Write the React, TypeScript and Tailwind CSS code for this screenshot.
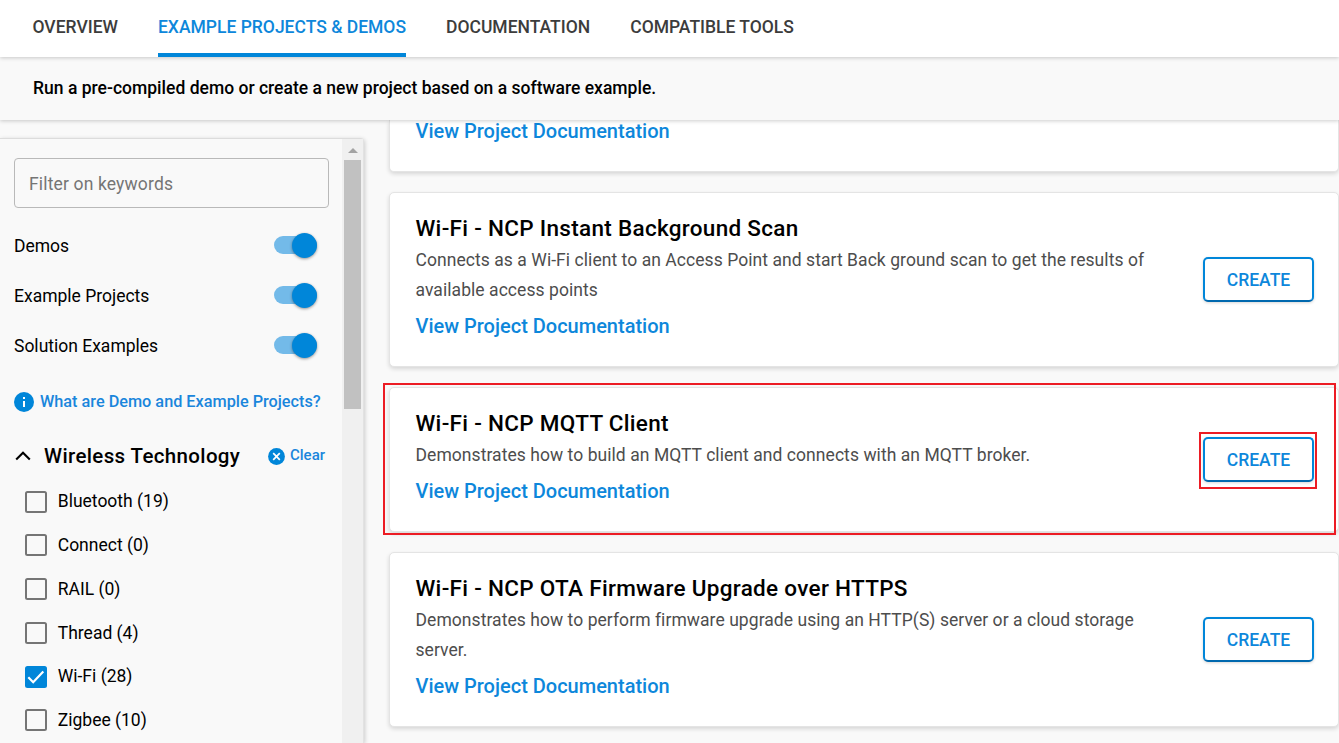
const tabs = ["OVERVIEW", "EXAMPLE PROJECTS & DEMOS", "DOCUMENTATION", "COMPATIBLE TOOLS"];
const activeTab = tabs[1];

const toggles = ["Demos", "Example Projects", "Solution Examples"];

const technologies = [
  { name: "Bluetooth", count: 19, checked: false },
  { name: "Connect", count: 0, checked: false },
  { name: "RAIL", count: 0, checked: false },
  { name: "Thread", count: 4, checked: false },
  { name: "Wi-Fi", count: 28, checked: true },
  { name: "Zigbee", count: 10, checked: false },
];

function Tabs() {
  return (
    <nav className="relative z-20 flex h-[57px] shrink-0 gap-10 bg-white pl-[32.5px] shadow-[0_1px_4px_rgba(0,0,0,0.2)]">
      {tabs.map((tab) => (
        <a
          key={tab}
          className={
            tab === activeTab
              ? "h-[57px] border-b-4 border-[#0086d9] text-[17.5px] leading-[54px] font-medium whitespace-nowrap text-[#0d87db]"
              : "h-[57px] text-[17.5px] leading-[54px] font-medium whitespace-nowrap text-[#3c3c3c]"
          }
        >
          {tab}
        </a>
      ))}
    </nav>
  );
}

function Toggle() {
  return (
    <span className="flex h-[18px] w-[43px] items-center justify-end rounded-full bg-[#73bae9]">
      <span className="size-[25px] shrink-0 rounded-full bg-[#0086d9] shadow-[0_1px_3px_rgba(0,0,0,0.4)]" />
    </span>
  );
}

function Checkbox({ checked }: { checked: boolean }) {
  if (!checked) {
    return <span className="size-[22px] rounded-[2.5px] border-2 border-[#757575]" />;
  }
  return (
    <span className="size-[22px] rounded-[2.5px] bg-[#0086d9]">
      <svg viewBox="0 0 22 22" className="size-[22px]" fill="none" stroke="#fff" strokeWidth="2.2">
        <path d="M3.3 11.3 8.2 16.2 18.3 5.6" />
      </svg>
    </span>
  );
}

function Sidebar() {
  return (
    <aside className="mt-[18px] flex w-[364px] shrink-0 rounded-tr-[4px] border-t border-r border-t-[#dcdcdc] border-r-[#e2e2e2] bg-[#f9f9f9] shadow-[1px_1px_4px_rgba(0,0,0,0.18)]">
      <div className="w-[342px] shrink-0 pt-[19px] pl-[14px]">
        <div className="h-[50px] w-[315px] rounded-[4px] border border-[#b9b9b9] pl-[14px] text-[17.5px] leading-[51px] tracking-[0.15px] text-[#757575]">
          Filter on keywords
        </div>
        <div className="mt-[12px]">
          {toggles.map((label) => (
            <div key={label} className="flex h-[50px] items-center justify-between pr-[25px] text-[17.5px] text-black">
              <span className="pt-[2px]">{label}</span>
              <Toggle />
            </div>
          ))}
        </div>
        <a className="mt-[22px] flex h-[20px] items-center gap-[6px] text-[16.25px] leading-[20px] font-medium whitespace-nowrap text-[#1a86dc]">
          <svg viewBox="0 0 20 20" className="size-5" fill="#0086d9">
            <circle cx="10" cy="10" r="10" />
            <path d="M9 5h2v2H9zM9 9h2v6H9z" fill="#fff" />
          </svg>
          <span>What are Demo and Example Projects?</span>
        </a>
        <div className="mt-[29px] flex h-[30px] items-center">
          <svg viewBox="0 0 18 12" className="h-3 w-[18px]" fill="none" stroke="#000" strokeWidth="2.1">
            <path d="M2.2 9.6 9 2.8 15.8 9.6" />
          </svg>
          <h2 className="ml-3 w-[224px] text-[20.5px] leading-[30px] font-medium tracking-[0.36px] whitespace-nowrap text-black">Wireless Technology</h2>
          <svg viewBox="0 0 17 17" className="size-[17px] shrink-0">
            <circle cx="8.5" cy="8.5" r="8.4" fill="#0086d9" />
            <path d="M5.2 5.2 11.8 11.8M11.8 5.2 5.2 11.8" stroke="#fff" strokeWidth="1.7" />
          </svg>
          <span className="ml-[5px] pb-[2px] text-[15px] leading-[28px] font-medium text-[#1a86dc]">Clear</span>
        </div>
        <ul className="mt-[8.7px] pl-[11px]">
          {technologies.map((t) => (
            <li key={t.name} className="flex h-[43.75px] items-center gap-[10.75px] text-[17.5px] text-black">
              <Checkbox checked={t.checked} />
              <span>{`${t.name} (${t.count})`}</span>
            </li>
          ))}
        </ul>
      </div>
      <div className="flex w-[21px] flex-col items-center bg-[#f0f0f0]">
        <svg viewBox="0 0 10 5" className="mt-[9px] h-[5px] w-[10px]" fill="#a3a3a3">
          <path d="M0 5 5 0 10 5z" />
        </svg>
        <div className="mt-[7px] h-[249px] w-[17px] bg-[#c1c1c1]" />
      </div>
    </aside>
  );
}

interface Project {
  title: string;
  lines: string[];
  highlighted?: boolean;
}

const projects: Project[] = [
  {
    title: "Wi-Fi - NCP Instant Background Scan",
    lines: [
      "Connects as a Wi-Fi client to an Access Point and start Back ground scan to get the results of",
      "available access points",
    ],
  },
  {
    title: "Wi-Fi - NCP MQTT Client",
    lines: ["Demonstrates how to build an MQTT client and connects with an MQTT broker."],
    highlighted: true,
  },
  {
    title: "Wi-Fi - NCP OTA Firmware Upgrade over HTTPS",
    lines: ["Demonstrates how to perform firmware upgrade using an HTTP(S) server or a cloud storage", "server."],
  },
];

function DocLink() {
  return <a className="block text-[20px] leading-[30px] font-medium text-[#0d87db]">View Project Documentation</a>;
}

function ProjectCard({ title, lines, highlighted }: Project) {
  return (
    <article className="relative flex items-center justify-between rounded-[5px] border border-[#e4e4e4] bg-white pr-[24px] pl-[25.5px] shadow-[0_2px_4px_rgba(0,0,0,0.14)]">
      <div className="pt-[20px] pb-[25px]">
        <h3 className="text-[22.5px] leading-[30px] font-medium tracking-[0.3px] text-black">{title}</h3>
        <div className="mt-[2px] mb-[6px]">
          {lines.map((line) => (
            <p key={line} className="text-[17.5px] leading-[30px] tracking-[0.058px] whitespace-nowrap text-[#4d4d4d]">
              {line}
            </p>
          ))}
        </div>
        <DocLink />
      </div>
      <button className="relative h-[45px] w-[111px] rounded-[5px] border-2 border-[#0086d9] border-b-[#0068ae] bg-white pt-px text-[17.5px] font-medium text-[#0d87db] shadow-[0_1px_3px_rgba(0,0,0,0.16)]">
        CREATE
        {highlighted && (
          <span className="absolute -top-[7px] -right-[5px] -bottom-[9px] -left-[6px] border-2 border-[#ec1c24]" />
        )}
      </button>
      {highlighted && (
        <span className="absolute -top-[5px] right-[2px] -bottom-[4px] -left-[7px] border-2 border-[#ec1c24]" />
      )}
    </article>
  );
}

export default function App() {
  return (
    <div className="flex h-[743px] w-[1339px] flex-col overflow-hidden bg-[#f9f9f9] font-['Roboto',sans-serif]">
      <Tabs />
      <header className="relative z-10 h-[63px] shrink-0 bg-[#f9f9f9] pl-[33px] text-[17.5px] leading-[62px] font-medium tracking-[0.01px] text-black shadow-[0_1px_4px_rgba(0,0,0,0.2)]">
        Run a pre-compiled demo or create a new project based on a software example.
      </header>
      <div className="flex min-h-0 flex-1 gap-[25px]">
        <Sidebar />
        <main className="flex flex-1 flex-col gap-[20px]">
          <article className="h-[52px] rounded-b-[5px] border border-t-0 border-[#e4e4e4] bg-white pl-[25.5px] shadow-[0_2px_4px_rgba(0,0,0,0.14)]">
            <div className="-mt-[4px]">
              <DocLink />
            </div>
          </article>
          {projects.map((p) => (
            <ProjectCard key={p.title} {...p} />
          ))}
        </main>
      </div>
    </div>
  );
}
